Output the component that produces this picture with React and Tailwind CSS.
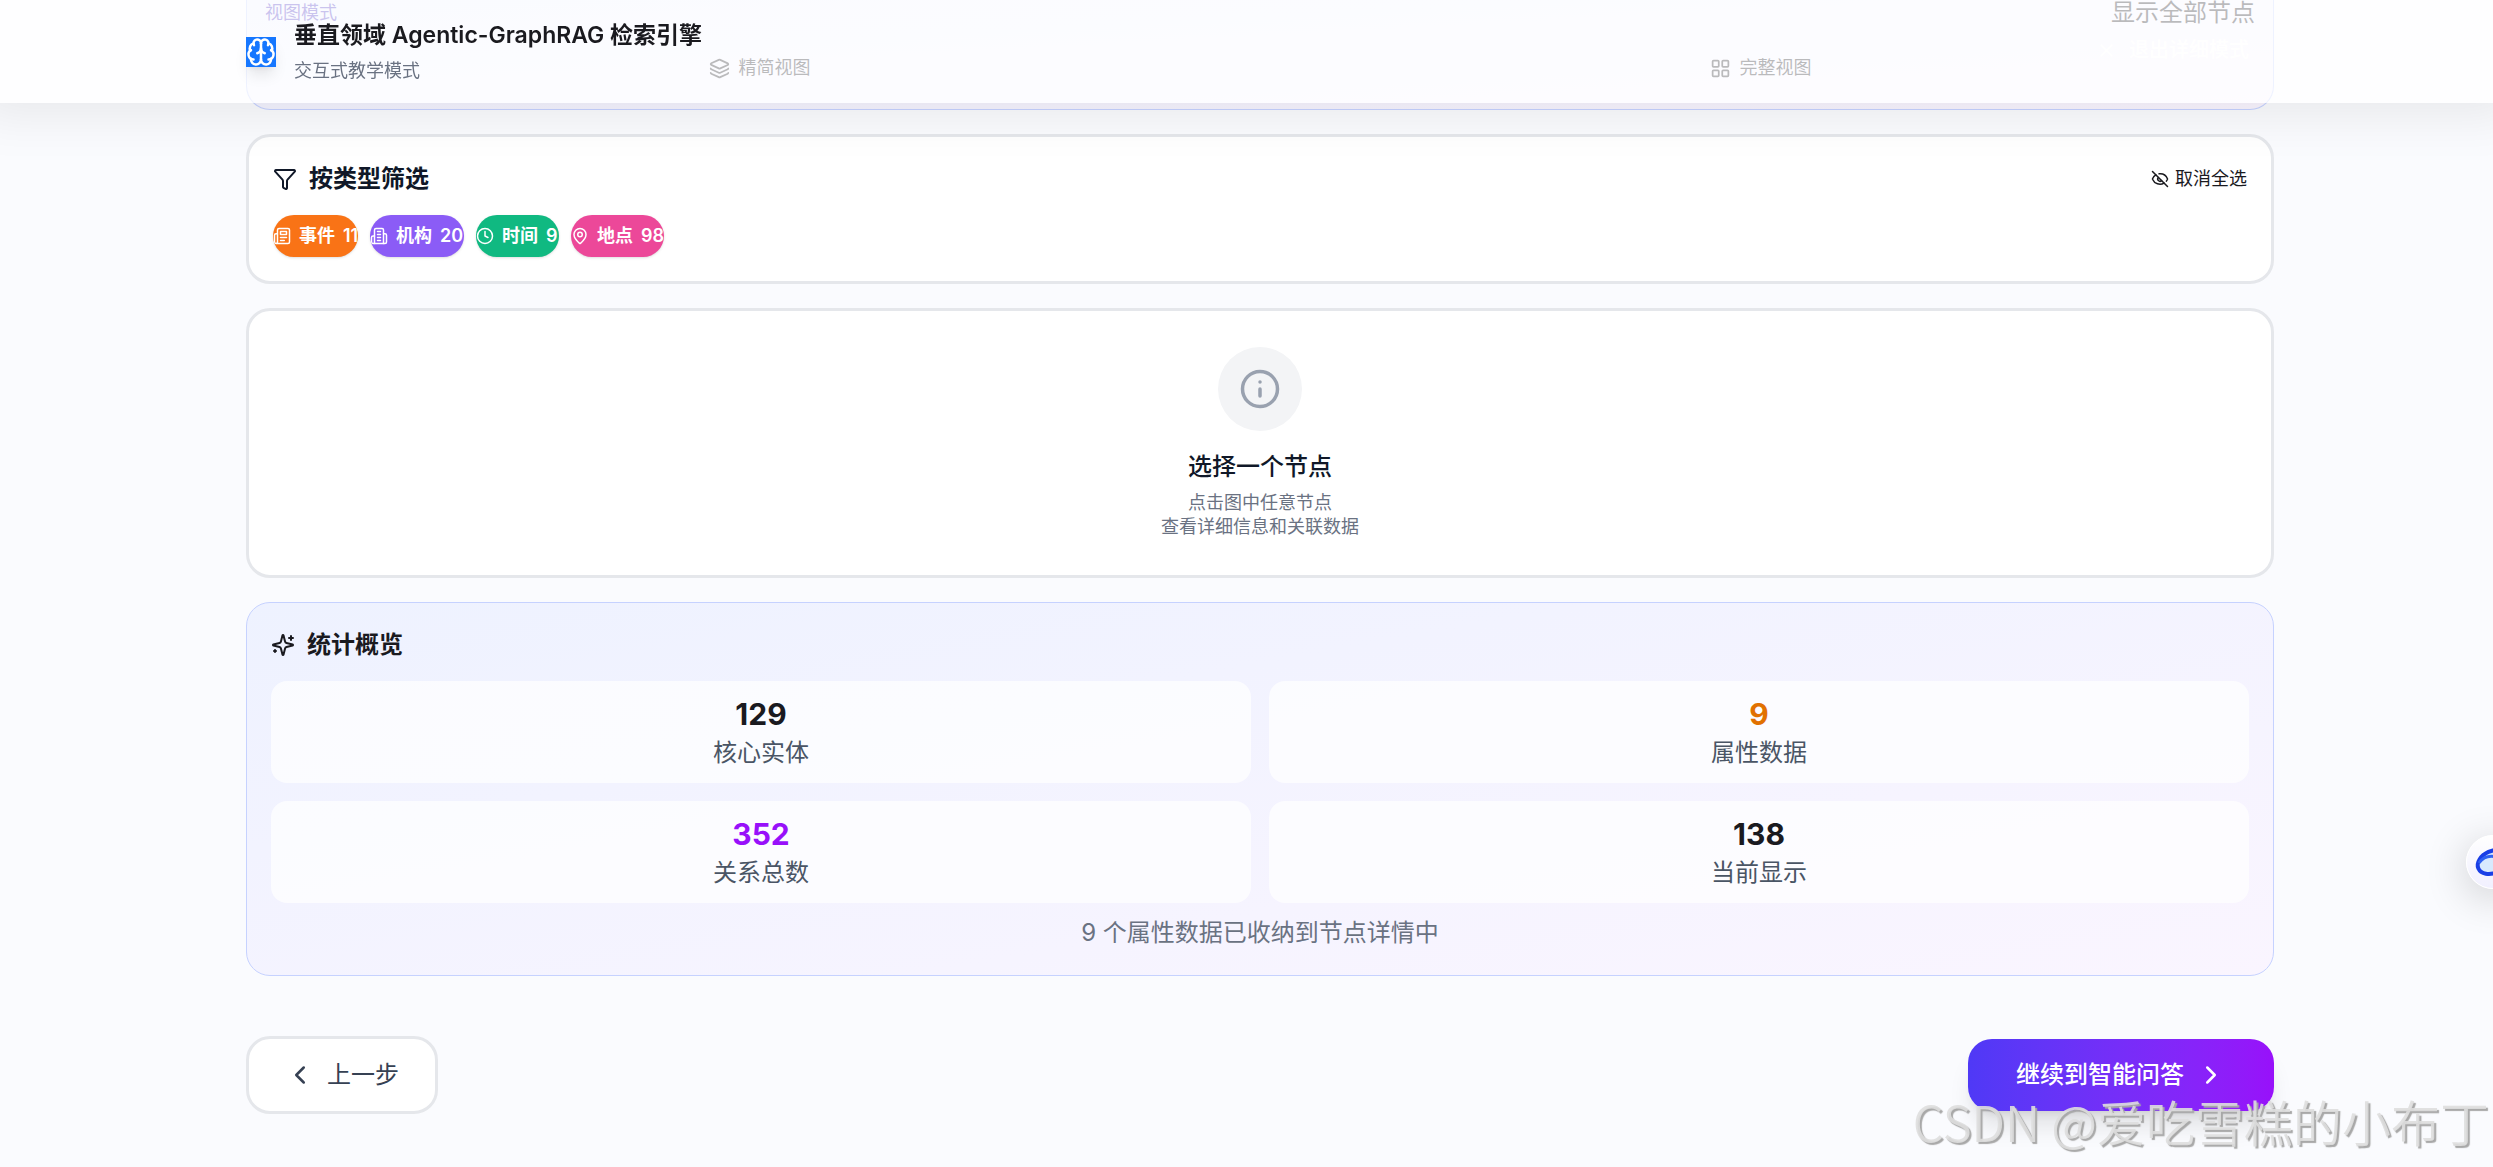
import { Brain, ChevronLeft, ChevronRight, Clock, EyeOff, Funnel, Info, Layers, LayoutGrid, MapPin, X } from 'lucide-react';

const LineIcon = ({ size, className, children }) => (
  <svg
    width={size}
    height={size}
    viewBox="0 0 24 24"
    fill="none"
    stroke="currentColor"
    strokeWidth="2"
    strokeLinecap="round"
    strokeLinejoin="round"
    className={className}
    aria-hidden="true"
  >
    {children}
  </svg>
);

const NewsIcon = (props) => (
  <LineIcon {...props}>
    <path d="M4 22h16a2 2 0 0 0 2-2V4a2 2 0 0 0-2-2H8a2 2 0 0 0-2 2v16a2 2 0 0 1-2 2Zm0 0a2 2 0 0 1-2-2v-9c0-1.1.9-2 2-2h2" />
    <path d="M18 14h-8M15 18h-5M10 6h8v4h-8V6Z" />
  </LineIcon>
);

const BuildingIcon = (props) => (
  <LineIcon {...props}>
    <path d="M6 22V4a2 2 0 0 1 2-2h8a2 2 0 0 1 2 2v18Z" />
    <path d="M6 12H4a2 2 0 0 0-2 2v6a2 2 0 0 0 2 2h2M18 9h2a2 2 0 0 1 2 2v9a2 2 0 0 1-2 2h-2" />
    <path d="M10 6h4M10 10h4M10 14h4M10 18h4" />
  </LineIcon>
);

const SparklesIcon = (props) => (
  <LineIcon {...props}>
    <path d="M9.937 15.5A2 2 0 0 0 8.5 14.063l-6.135-1.582a.5.5 0 0 1 0-.962L8.5 9.936A2 2 0 0 0 9.937 8.5l1.582-6.135a.5.5 0 0 1 .963 0L14.063 8.5A2 2 0 0 0 15.5 9.937l6.135 1.581a.5.5 0 0 1 0 .964L15.5 14.063a2 2 0 0 0-1.437 1.437l-1.582 6.135a.5.5 0 0 1-.963 0z" />
    <path d="M20 3v4M22 5h-4M4 17v2M5 18H3" />
  </LineIcon>
);

const types = [
  { label: '事件', count: 11, icon: NewsIcon, style: 'w-[85px] bg-[#f97316]' },
  { label: '机构', count: 20, icon: BuildingIcon, style: 'w-[94px] bg-[#8b5cf6]' },
  { label: '时间', count: 9, icon: Clock, style: 'w-[83px] bg-[#10b981]' },
  { label: '地点', count: 98, icon: MapPin, style: 'w-[93px] bg-[#ec4899]' },
];

const stats = [
  { label: '核心实体', value: 129, color: 'text-[#1a1a1f]' },
  { label: '属性数据', value: 9, color: 'text-[#e17100]' },
  { label: '关系总数', value: 352, color: 'text-[#9810fa]' },
  { label: '当前显示', value: 138, color: 'text-[#1a1a1f]' },
];

const Header = () => (
  <header className="fixed inset-x-0 top-0 z-10 bg-white/70 pl-[27px] shadow-[0_-12px_48px_24px_rgba(0,0,0,0.08)]">
    <div className="mx-auto flex max-w-[2028px] items-center gap-[18px] pt-[17px] pb-4">
      <div className="flex size-[30px] items-center justify-center bg-[#1677ff] text-white shadow-lg">
        <Brain size={30} />
      </div>
      <div>
        <h1 className="text-[23px] leading-9 font-semibold text-[#1a1a1f]">垂直领域 Agentic-GraphRAG 检索引擎</h1>
        <p className="mt-0.5 text-lg leading-8 text-[#6a7282]">交互式教学模式</p>
      </div>
    </div>
  </header>
);

const ViewMode = () => (
  <section className="relative rounded-b-3xl border-x border-b border-[#c6d2ff] bg-linear-to-br from-[#eef2ff] to-[#faf5ff] px-[18px] pb-[23px]">
    <div className="flex h-[26px] items-center justify-between leading-6">
      <span className="text-lg leading-6 text-[#4f39c6]">视图模式</span>
      <span className="text-2xl leading-6 text-[#1a1a1f]">显示全部节点</span>
    </div>
    <div className="mt-6 grid grid-cols-2 gap-3 text-lg leading-9 text-[#1a1a1f]">
      <button className="flex items-center justify-center gap-[9px]">
        <Layers size={21} />
        精简视图
      </button>
      <button className="flex items-center justify-center gap-[9px]">
        <LayoutGrid size={21} />
        完整视图
      </button>
    </div>
    <button className="absolute top-9 right-6 flex items-center gap-3 text-xl leading-7 font-medium text-white">
      <X size={21} />
      退出详细模式
    </button>
  </section>
);

const FilterCard = () => (
  <section className="rounded-3xl border-3 border-[#e5e7eb] bg-white p-6">
    <div className="flex items-center justify-between">
      <h2 className="flex items-center gap-3 text-2xl leading-9 font-semibold text-[#101828]">
        <Funnel size={24} />
        按类型筛选
      </h2>
      <button className="flex items-center gap-1.5 text-lg text-[#1a1a1f]">
        <EyeOff size={18} />
        取消全选
      </button>
    </div>
    <div className="mt-[18px] flex gap-3">
      {types.map(({ label, count, icon: Icon, style }) => (
        <button
          key={label}
          className={`flex h-[42px] items-center gap-2 overflow-hidden rounded-full text-lg font-semibold whitespace-nowrap text-white shadow-sm ${style}`}
        >
          <Icon size={18} className="shrink-0" />
          <span>{label}</span>
          <span>{count}</span>
        </button>
      ))}
    </div>
  </section>
);

const NodeCard = () => (
  <section className="flex flex-col items-center rounded-3xl border-3 border-[#e5e7eb] bg-white p-9 text-center">
    <div className="flex size-[84px] items-center justify-center rounded-full bg-[#f3f4f6] text-[#99a1af]">
      <Info size={42} />
    </div>
    <h2 className="mt-[18px] text-2xl leading-9 font-medium text-[#101828]">选择一个节点</h2>
    <p className="mt-1.5 text-lg leading-6 text-[#6a7282]">
      点击图中任意节点
      <br />
      查看详细信息和关联数据
    </p>
  </section>
);

const StatsCard = () => (
  <section className="rounded-3xl border border-[#c6d2ff] bg-linear-to-br from-[#eef2ff] to-[#faf5ff] p-6">
    <h2 className="flex items-center gap-3 text-2xl leading-9 font-semibold text-[#1a1a1f]">
      <SparklesIcon size={24} />
      统计概览
    </h2>
    <div className="mt-[18px] grid grid-cols-2 gap-[18px]">
      {stats.map((item) => (
        <div key={item.label} className="rounded-2xl bg-white/70 pt-[15px] pb-3 text-center">
          <p className={`text-3xl leading-9 font-bold ${item.color}`}>{item.value}</p>
          <p className="mt-[3px] text-2xl leading-9 text-[#4a5565]">{item.label}</p>
        </div>
      ))}
    </div>
    <p className="mt-3 text-center text-2xl leading-9 text-[#6a7282]">9 个属性数据已收纳到节点详情中</p>
  </section>
);

const Assistant = () => (
  <button
    aria-label="助手"
    className="fixed top-[835px] -right-[27px] z-20 size-[54px] rounded-full border border-white bg-linear-to-b from-white to-[#f1f0ff] shadow-[0_8px_44px_rgba(0,0,0,0.2)]"
  >
    <svg viewBox="0 0 54 54" fill="none" className="-m-px size-[54px]" aria-hidden="true">
      <ellipse cx="27" cy="27" rx="16" ry="11" transform="rotate(-24 27 27)" fill="#d8eafe" stroke="#1a3fe6" strokeWidth="4" />
      <path d="M13 28c4-6 11-8 18-6" stroke="#2f62f2" strokeWidth="3" />
    </svg>
  </button>
);

const App = () => {
  return (
    <div className="relative min-h-screen overflow-hidden bg-[#fafbfe] pl-[27px] font-[Inter,'Noto_Sans_CJK_SC',sans-serif]">
      <Header />
      <main className="mx-auto flex max-w-[2028px] flex-col gap-6">
        <ViewMode />
        <FilterCard />
        <NodeCard />
        <StatsCard />
        <div className="mt-9 flex items-center justify-between">
          <button className="flex items-center gap-3 rounded-3xl border-3 border-[#e5e7eb] bg-white px-9 py-[18px] text-2xl leading-9 text-[#364153]">
            <ChevronLeft size={30} />
            上一步
          </button>
          <button className="flex items-center gap-3 rounded-3xl bg-linear-to-r from-[#4f39f6] to-[#9810fa] px-12 py-[18px] text-2xl leading-9 font-medium text-white shadow-xl">
            继续到智能问答
            <ChevronRight size={30} />
          </button>
        </div>
      </main>
      <Assistant />
      <p className="pointer-events-none fixed right-1 bottom-3.5 z-20 font-['Noto_Sans_CJK_SC',sans-serif] text-[49px] leading-[64px] font-[350] text-[#dedede]/90 [text-shadow:2px_2px_1px_#a8a8a8]">
        CSDN @爱吃雪糕的小布丁
      </p>
    </div>
  );
};

export default App;
